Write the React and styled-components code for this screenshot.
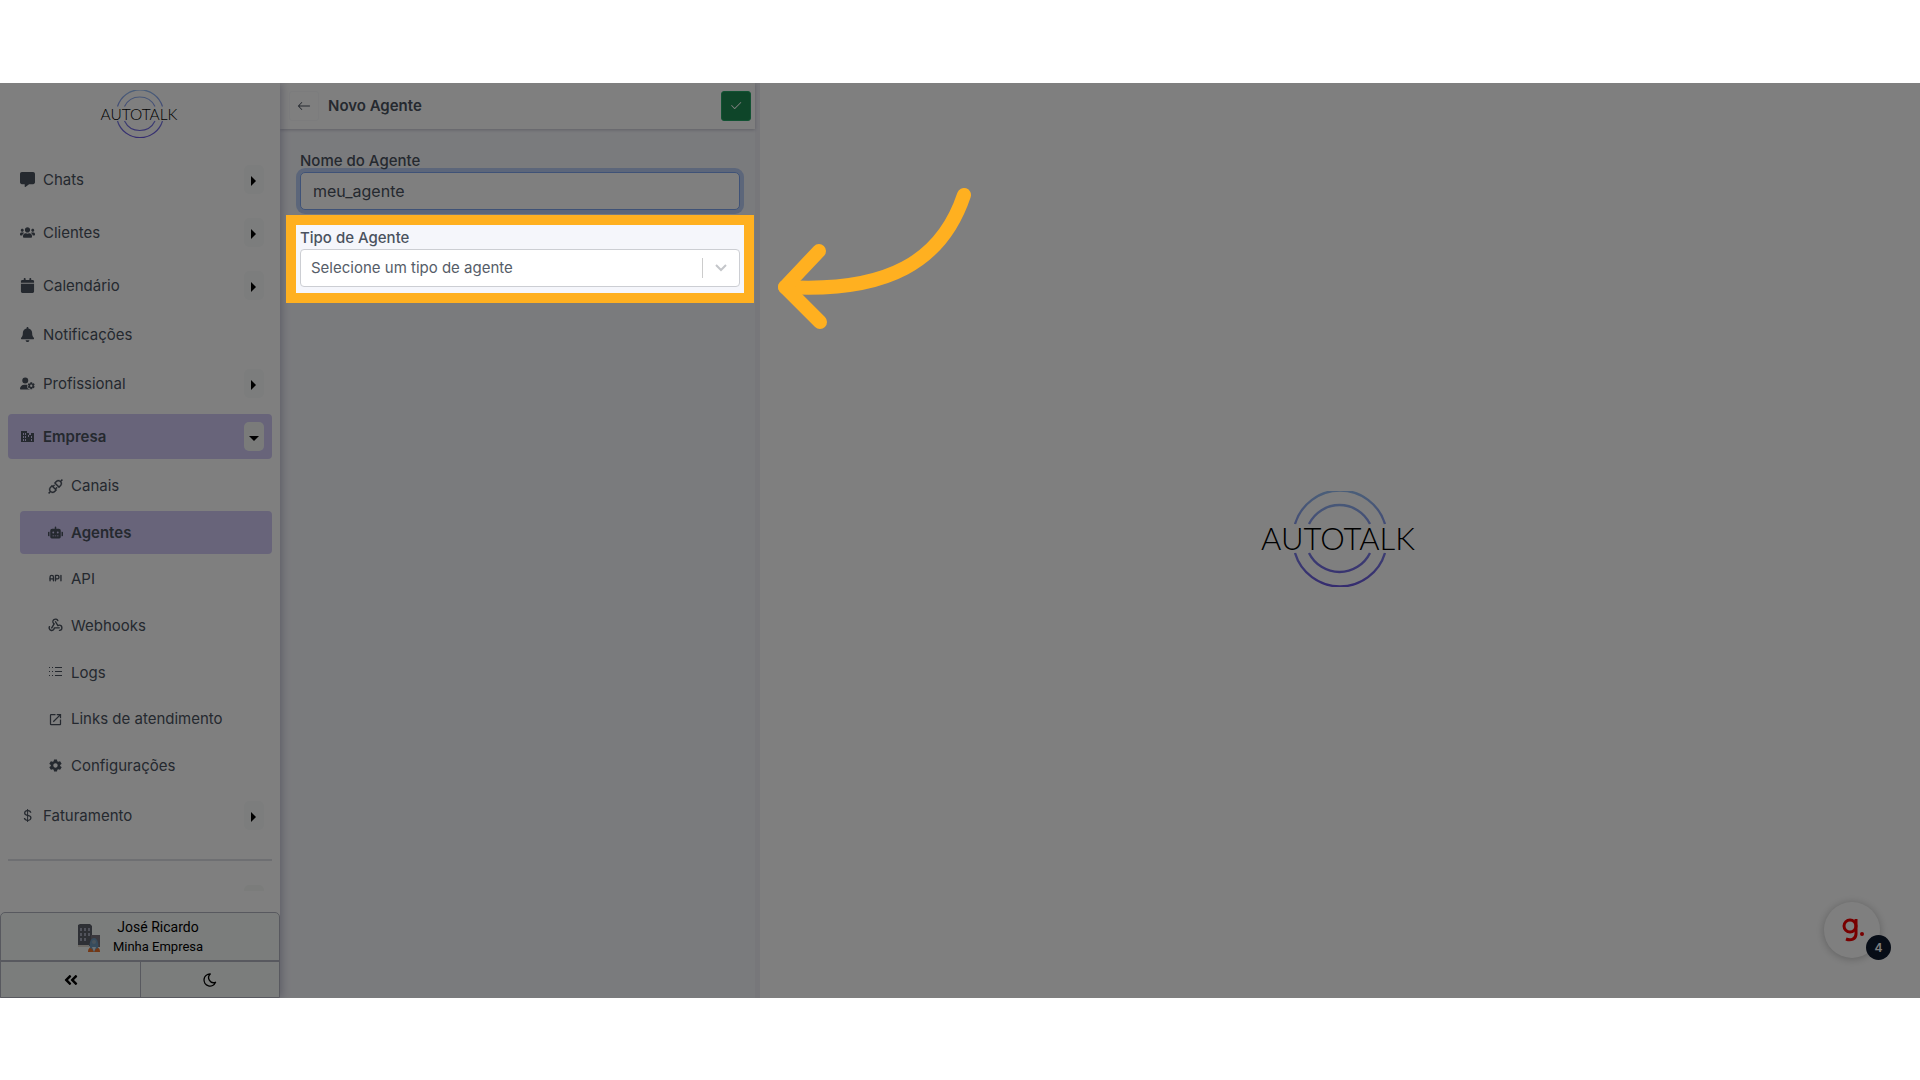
import React, { useState } from "react";
import styled, { createGlobalStyle } from "styled-components";
import { FaMessage, FaCalendar, FaBell, FaUserGear } from "react-icons/fa6";
import { FaUsers, FaRobot, FaAngleDoubleLeft } from "react-icons/fa";
import { AiOutlineApi } from "react-icons/ai";
import { PiWebhooksLogoBold } from "react-icons/pi";
import { TbApi, TbMoon } from "react-icons/tb";
import { MdOpenInNew } from "react-icons/md";
import { IoMdSettings } from "react-icons/io";
import { BsArrowLeft, BsCheck2, BsCurrencyDollar } from "react-icons/bs";

const GlobalStyle = createGlobalStyle`
  *,
  *::before,
  *::after {
    box-sizing: border-box;
  }

  body {
    margin: 0;
    background: #fff;
    color: #4a525e;
    font-family: Inter, "Liberation Sans", sans-serif;
    font-size: 15px;
    line-height: 22px;
  }

  button,
  input,
  select {
    color: inherit;
    font: inherit;
  }
`;

const Page = styled.div`
  display: flex;
  min-height: 100vh;
  padding: 83px 0 82px;
`;

const Stage = styled.div`
  position: relative;
  display: flex;
  flex: 1;
  overflow: hidden;
  background: #fff;
`;

const Sidebar = styled.aside`
  display: flex;
  flex: 0 0 280px;
  flex-direction: column;
  z-index: 1;
  background: #fff;
  box-shadow: 2px 0 8px rgba(60, 60, 110, 0.3);
`;

const Brand = styled.div`
  display: flex;
  align-items: flex-start;
  justify-content: center;
  height: 70px;
  padding-top: 7px;
`;

const Menu = styled.nav`
  flex: 1;
  padding: 0 8px;
`;

const MenuRow = styled.div`
  display: flex;
  align-items: center;
  height: ${(props) => (props.$plain ? "45px" : "53px")};
`;

const MenuItem = styled.div`
  display: flex;
  flex: 1;
  align-items: center;
  height: 45px;
  padding: 0 8px 0 12px;
  border-radius: 4px;
  background: ${(props) => (props.$active ? "#d0c9f5" : "transparent")};
  font-weight: ${(props) => (props.$active ? 600 : 400)};
`;

const MenuLink = styled.a`
  display: flex;
  flex: 1;
  align-items: center;
  gap: 8px;
  color: inherit;
  text-decoration: none;

  svg {
    flex: none;
    width: 15px;
    height: 15px;
  }
`;

const Toggle = styled.button`
  display: flex;
  align-items: center;
  justify-content: center;
  width: 20px;
  height: 29px;
  padding: 2px 0 0;
  border: 0;
  border-radius: 5px;
  background: ${(props) => (props.$open ? "#f4f7f4" : "#f9fbfa")};
  color: #000;
`;

const SubMenu = styled.div`
  display: grid;
  grid-auto-rows: 1fr;
  align-items: center;
  height: 326px;
  padding-left: 12px;
`;

const SubLink = styled(MenuLink)`
  height: 43px;
  padding-left: 28px;
  border-radius: 4px;
  background: ${(props) => (props.$active ? "#d0c9f5" : "transparent")};
  font-weight: ${(props) => (props.$active ? 600 : 400)};
`;

const Divider = styled.hr`
  height: 2px;
  margin: 17px 0 24px;
  border: 0;
  background: #dcdee4;
`;

const HiddenRow = styled.div`
  width: 20px;
  height: 6px;
  margin: 0 8px 0 auto;
  border-radius: 5px 5px 0 0;
  background: #f6f9f7;
`;

const Account = styled.div`
  border: 1px solid #b0b3be;
  border-radius: 5px 5px 0 0;
  background: #f7fbf9;
  color: #000;
`;

const User = styled.div`
  display: flex;
  align-items: center;
  justify-content: center;
  gap: 12px;
  height: 49px;
  border-bottom: 2px solid #b0b3be;
`;

const UserText = styled.div`
  font-family: Roboto, sans-serif;
  font-size: 14px;
  line-height: 20px;
  text-align: center;
`;

const Company = styled.div`
  font-size: 13px;
`;

const AccountActions = styled.div`
  display: grid;
  grid-template-columns: 1fr 1fr;
  height: 35px;
`;

const ActionButton = styled.button`
  display: flex;
  align-items: center;
  justify-content: center;
  padding: 0;
  border: 0;
  background: none;

  & + & {
    border-left: 1px solid #b0b3be;
  }
`;

const Panel = styled.section`
  flex: 0 0 480px;
  border-right: 5px solid #eeeef5;
  background: #f5f6fb;
`;

const PanelHeader = styled.header`
  display: flex;
  align-items: center;
  gap: 9px;
  height: 46px;
  padding: 0 4px 0 9px;
  background: #fff;
  box-shadow: 0 1px 3px rgba(40, 40, 70, 0.25);
`;

const IconButton = styled.button`
  display: flex;
  align-items: center;
  justify-content: center;
  width: 30px;
  height: 30px;
  padding: 0;
  border: 1px solid ${(props) => (props.$success ? "#24a566" : "#f8f9fb")};
  border-radius: 3px;
  background: ${(props) => (props.$success ? "#1c8a52" : "#fff")};
  color: ${(props) => (props.$success ? "#fff" : "inherit")};
`;

const PanelTitle = styled.h1`
  flex: 1;
  margin: 0;
  font-size: 15px;
  font-weight: 600;
`;

const Form = styled.form`
  display: flex;
  flex-direction: column;
  gap: 17px;
  padding: 21px 15px 0 20px;
`;

const Field = styled.div`
  position: relative;
`;

const Label = styled.label`
  display: block;
  height: 22px;
  font-weight: 500;
`;

const TextInput = styled.input`
  display: block;
  width: 100%;
  height: 38px;
  padding: 0 12px;
  border: 1px solid #7ea5ef;
  border-radius: 5px;
  outline: 0;
  background: #fff;
  box-shadow: 0 0 0 4px #b9cdf5;
  font-size: 16px;
`;

const SelectBox = styled.div`
  display: flex;
  align-items: center;
  height: 38px;
  border: 1px solid #ccced3;
  border-radius: 4px;
  background: #fff;
  color: #c4c6ca;
`;

const Select = styled.select`
  flex: 1;
  height: 20px;
  padding: 0 10px;
  border: 0;
  border-right: 1px solid #ccc;
  outline: 0;
  appearance: none;
  background: none;
  color: #565d68;
  line-height: 20px;
`;

const Chevron = styled.svg`
  width: 12px;
  height: 8px;
  margin: 0 12px;
`;

// the shadow dims everything outside the highlighted field
const Spotlight = styled.div`
  position: absolute;
  inset: -12px -14px -16px;
  z-index: 5;
  border: 10px solid #ffb020;
  box-shadow: 0 0 0 4000px rgba(0, 0, 0, 0.5);
  pointer-events: none;
`;

const Pointer = styled.svg`
  position: absolute;
  top: -54px;
  left: 472px;
  z-index: 6;
  width: 210px;
  height: 160px;
  pointer-events: none;
`;

const Content = styled.main`
  display: flex;
  flex: 1;
  align-items: center;
  justify-content: center;
  padding-bottom: 4px;
`;

const Launcher = styled.button`
  position: absolute;
  right: 40px;
  bottom: 40px;
  display: flex;
  align-items: center;
  justify-content: center;
  width: 56px;
  height: 56px;
  padding: 0;
  border: 0;
  border-radius: 50%;
  background: #fff;
  box-shadow: 0 1px 8px rgba(0, 0, 0, 0.25);
`;

const Count = styled.span`
  position: absolute;
  right: -11px;
  bottom: -2px;
  width: 25px;
  height: 25px;
  border-radius: 50%;
  background: #0f1a2e;
  color: #fff;
  font-size: 12px;
  font-weight: 600;
  line-height: 25px;
`;

function BuildingsIcon() {
  return (
    <svg viewBox="0 0 15 15" fill="currentColor">
      <path
        fillRule="evenodd"
        d="M1 2h6v2h2v2h2V4h3v9H1zM3 4v2h1V4zM5 4v2h1V4zM3 7v2h1V7zM5 7v2h1V7zM3 10v2h1v-2zM5 10v2h1v-2zM8 6v2h1V6zM11 7v2h1V7zM11 10v2h1v-2z"
      />
    </svg>
  );
}

function ListIcon() {
  return (
    <svg viewBox="0 0 15 15" fill="currentColor">
      <path d="M1 2h1v1H1zM4 2h1v1H4zM7 2h7v1H7zM1 6h1v1H1zM4 6h1v1H4zM7 6h7v1H7zM1 10h1v1H1zM4 10h1v1H4zM7 10h7v1H7z" />
    </svg>
  );
}

function PlugIcon() {
  return <AiOutlineApi viewBox="90 90 844 844" strokeWidth={16} />;
}

function ApiIcon() {
  return <TbApi strokeWidth={2} viewBox="1 3 22 22" />;
}

const SUB_ITEMS = [
  { label: "Canais", icon: PlugIcon },
  { label: "Agentes", icon: FaRobot, active: true },
  { label: "API", icon: ApiIcon },
  { label: "Webhooks", icon: PiWebhooksLogoBold },
  { label: "Logs", icon: ListIcon },
  { label: "Links de atendimento", icon: MdOpenInNew },
  { label: "Configurações", icon: IoMdSettings },
];

const ITEMS = [
  { label: "Chats", icon: FaMessage },
  { label: "Clientes", icon: FaUsers },
  { label: "Calendário", icon: FaCalendar },
  { label: "Notificações", icon: FaBell, plain: true },
  { label: "Profissional", icon: FaUserGear },
  { label: "Empresa", icon: BuildingsIcon, active: true, children: SUB_ITEMS },
  { label: "Faturamento", icon: BsCurrencyDollar },
];

function Logo({ width, id }) {
  return (
    <svg width={width} viewBox="0 0 160 96" role="img" aria-label="Autotalk">
      <defs>
        <linearGradient
          id={id}
          gradientUnits="userSpaceOnUse"
          x1="0"
          y1="0"
          x2="0"
          y2="96"
        >
          <stop offset="0" stopColor="#96bdf2" />
          <stop offset="1" stopColor="#6a58de" />
        </linearGradient>
      </defs>
      <g fill="none" stroke={`url(#${id})`} strokeWidth="2.4">
        <path d="M35 33a47 47 0 0 1 90 0M49 33a34 34 0 0 1 61 0" />
        <path d="M35 62a47 47 0 0 0 90 0M49 62a34 34 0 0 0 61 0" />
      </g>
      <text
        x="78"
        y="59"
        fill="#000"
        fontFamily="Lato, sans-serif"
        fontSize="31"
        fontWeight="300"
        textAnchor="middle"
      >
        AUTOTALK
      </text>
    </svg>
  );
}

function Caret({ open }) {
  return (
    <svg width="10" height="10" viewBox="0 0 10 10" fill="currentColor">
      <path d={open ? "M0 3h10L5 8z" : "M2 0v10l5-5z"} />
    </svg>
  );
}

function CompanyIcon() {
  return (
    <svg width="24" height="32" viewBox="0 -2 24 32">
      <path d="M1 2l2-1h10l2 2v20H1z" fill="#5d606b" />
      <path
        d="M3 5h2v3H3zM7 5h2v3H7zM11 5h2v3h-2zM3 10h2v3H3zM7 10h2v3H7zM11 10h2v3h-2zM3 15h2v3H3zM7 15h2v3H7z"
        fill="#a3a6b8"
      />
      <path d="M14 12h9v12h-9z" fill="#77727c" />
      <path d="M1 22h11v2H1z" fill="#d8d4cc" />
      <path d="M11 29c0-4 2-5 6-5s6 1 6 5z" fill="#e8702a" />
      <path d="M13 25c-1-3 0-10 4-10s5 7 4 10l-2 1-2 3-2-3z" fill="#6f98ba" />
      <circle cx="17" cy="19" r="2" fill="#94aabb" />
      <path d="M15 24h4l-2 5z" fill="#d9e2ea" />
    </svg>
  );
}

function Item({ label, icon: Icon, active, plain, children }) {
  return (
    <>
      <MenuRow $plain={plain}>
        <MenuItem $active={active}>
          <MenuLink href="#">
            <Icon />
            {label}
          </MenuLink>
          {!plain && (
            <Toggle type="button" $open={active} aria-label={`Abrir ${label}`}>
              <Caret open={active} />
            </Toggle>
          )}
        </MenuItem>
      </MenuRow>
      {children && (
        <SubMenu>
          {children.map(({ label, icon: SubIcon, active }) => (
            <SubLink key={label} href="#" $active={active}>
              <SubIcon />
              {label}
            </SubLink>
          ))}
        </SubMenu>
      )}
    </>
  );
}

export default function App() {
  const [name, setName] = useState("meu_agente");

  return (
    <Page>
      <GlobalStyle />
      <Stage>
        <Sidebar>
          <Brand>
            <Logo width={80} id="brand-small" />
          </Brand>
          <Menu>
            {ITEMS.map((item) => (
              <Item key={item.label} {...item} />
            ))}
            <Divider />
            <HiddenRow />
          </Menu>
          <Account>
            <User>
              <CompanyIcon />
              <UserText>
                José Ricardo
                <Company>Minha Empresa</Company>
              </UserText>
            </User>
            <AccountActions>
              <ActionButton type="button" aria-label="Recolher menu">
                <FaAngleDoubleLeft size={16} />
              </ActionButton>
              <ActionButton type="button" aria-label="Modo escuro">
                <TbMoon size={16} />
              </ActionButton>
            </AccountActions>
          </Account>
        </Sidebar>

        <Panel>
          <PanelHeader>
            <IconButton type="button" aria-label="Voltar">
              <BsArrowLeft size={14} />
            </IconButton>
            <PanelTitle>Novo Agente</PanelTitle>
            <IconButton type="submit" form="agent" $success aria-label="Salvar">
              <BsCheck2 size={14} />
            </IconButton>
          </PanelHeader>
          <Form id="agent">
            <Field>
              <Label htmlFor="name">Nome do Agente</Label>
              <TextInput
                id="name"
                value={name}
                onChange={(e) => setName(e.target.value)}
              />
            </Field>
            <Field>
              <Label htmlFor="type">Tipo de Agente</Label>
              <SelectBox>
                <Select id="type">
                  <option>Selecione um tipo de agente</option>
                </Select>
                <Chevron viewBox="0 0 12 8" fill="none" stroke="currentColor">
                  <path d="M1 1l5 5 5-5" strokeWidth="2" />
                </Chevron>
              </SelectBox>
              <Spotlight />
              <Pointer
                viewBox="0 0 210 160"
                fill="none"
                stroke="#ffb020"
                strokeWidth="14"
                strokeLinecap="round"
                strokeLinejoin="round"
              >
                <path d="M192 22C170 88 116 120 13 114" />
                <path d="M47 78L13 114L48 149" />
              </Pointer>
            </Field>
          </Form>
        </Panel>

        <Content>
          <Logo width={160} id="brand-large" />
        </Content>

        <Launcher type="button" aria-label="Abrir ajuda">
          <svg width="24" height="26" viewBox="0 0 24 26" fill="none">
            <g stroke="#f00000" strokeWidth="3">
              <circle cx="10" cy="9" r="6" />
              <path d="M16 2v15c0 5-5 7-10 5" />
            </g>
            <circle cx="22" cy="17" r="2" fill="#f00000" />
          </svg>
          <Count>4</Count>
        </Launcher>
      </Stage>
    </Page>
  );
}
